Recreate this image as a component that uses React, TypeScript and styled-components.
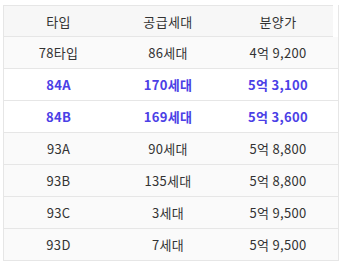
import styled, { createGlobalStyle } from 'styled-components';

const GlobalStyle = createGlobalStyle`
  html, body {
    margin: 0;
    padding: 0;
    background: #fff;
  }
  body {
    font-family: "Noto Sans CJK KR", "Noto Sans", sans-serif;
  }
`;

interface RowProps {
  highlight?: boolean;
}

const Wrapper = styled.div`
  padding: 5px 0 0 3px;
`;

const Table = styled.div`
  width: 336px;
  border-left: 1px solid #e6e6e6;
  border-right: 1px solid #e6e6e6;
  box-sizing: border-box;
`;

const HeadRow = styled.div`
  display: grid;
  grid-template-columns: 109px 110px 110px;
  width: 329px;
  height: 32px;
  background-color: #f7f7f7;
  border-top: 1px solid #e6e6e6;
  border-bottom: 1px solid #e6e6e6;
  box-sizing: border-box;
  margin-right: 6px;
`;

const HeadCell = styled.div`
  display: flex;
  align-items: center;
  justify-content: center;
  font-size: 13px;
  letter-spacing: 0.4px;
  color: #333;
`;

const BodyRow = styled.div<RowProps>`
  display: grid;
  grid-template-columns: 109px 110px 110px 1fr;
  height: 32px;
  background-color: ${(p) => (p.highlight ? '#fff' : '#fafafa')};
  border-bottom: 1px solid #e6e6e6;
  box-sizing: border-box;
`;

const Cell = styled.div<RowProps>`
  display: flex;
  align-items: center;
  justify-content: center;
  font-size: 13px;
  letter-spacing: 0.3px;
  white-space: pre;
  color: ${(p) => (p.highlight ? '#4b40e6' : '#333')};
  font-weight: ${(p) => (p.highlight ? 700 : 400)};
`;

const rows = [
  { type: '78타입', units: '86세대', price: '4억 9,200' },
  { type: '84A', units: '170세대', price: '5억 3,100', highlight: true },
  { type: '84B', units: '169세대', price: '5억 3,600', highlight: true },
  { type: '93A', units: '90세대', price: '5억 8,800' },
  { type: '93B', units: '135세대', price: '5억 8,800' },
  { type: '93C', units: '3세대', price: '5억 9,500' },
  { type: '93D', units: '7세대', price: '5억 9,500' },
];

const App = () => {
  return (
    <Wrapper>
      <GlobalStyle />
      <Table>
        <HeadRow>
          <HeadCell>타입</HeadCell>
          <HeadCell>공급세대</HeadCell>
          <HeadCell>분양가</HeadCell>
        </HeadRow>
        {rows.map((r) => (
          <BodyRow key={r.type} highlight={r.highlight}>
            <Cell highlight={r.highlight}>{r.type}</Cell>
            <Cell highlight={r.highlight}>{r.units}</Cell>
            <Cell highlight={r.highlight}>{r.price}</Cell>
          </BodyRow>
        ))}
      </Table>
    </Wrapper>
  );
};

export default App;
